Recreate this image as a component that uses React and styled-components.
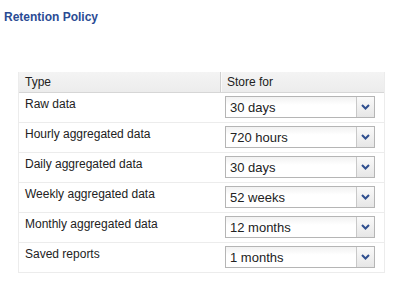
import React from 'react'
import styled, { createGlobalStyle } from 'styled-components'

const Global = createGlobalStyle`
  body {
    margin: 0;
    background: #fff;
    font-family: "Liberation Sans", Arial, sans-serif;
  }
`

const Page = styled.div`
  width: 400px;
  height: 300px;
  padding: 10px 0 0 4px;
  box-sizing: border-box;
`

const Title = styled.h2`
  margin: 0 0 47px;
  font-size: 12px;
  font-weight: bold;
  color: #2a4b94;
  line-height: 15px;
`

const Table = styled.div`
  margin-left: 14px;
  width: 365px;
  border: 1px solid #ececec;
  border-top: none;
  background: #fff;
`

const HeaderRow = styled.div`
  display: grid;
  grid-template-columns: 201px 1fr;
  height: 20px;
  background: linear-gradient(#f4f4f4, #ececec);
  border-bottom: 1px solid #d6d6d6;
`

const HeaderCell = styled.div`
  padding: 3px 6px 0;
  font-size: 12px;
  color: #222;
  border-left: ${({ $divider }) => ($divider ? '1px solid #d0d0d0' : 'none')};
  box-shadow: ${({ $divider }) => ($divider ? 'inset 1px 0 0 #fafafa' : 'none')};
`

const Row = styled.div`
  display: grid;
  grid-template-columns: 201px 1fr;
  height: 29px;
  border-bottom: 1px solid #ececec;
  &:last-child {
    border-bottom: none;
  }
`

const Label = styled.div`
  padding: 4px 6px 0;
  font-size: 12px;
  color: #222;
`

const SelectCell = styled.div`
  padding: 3px 0 0 5px;
`

const Select = styled.div`
  display: flex;
  width: 148px;
  height: 20px;
  border: 1px solid #b5b5b5;
  background: linear-gradient(#f2f2f2, #fff 40%);
`

const Value = styled.div`
  flex: 1;
  padding: 2px 4px 0;
  font-size: 13px;
  color: #222;
  line-height: 17px;
`

const Arrow = styled.div`
  width: 17px;
  display: flex;
  align-items: center;
  justify-content: center;
  border-left: 1px solid #c8c8c8;
  background: linear-gradient(#fafafa, #e6e6e6);
`

const rows = [
  ['Raw data', '30 days'],
  ['Hourly aggregated data', '720 hours'],
  ['Daily aggregated data', '30 days'],
  ['Weekly aggregated data', '52 weeks'],
  ['Monthly aggregated data', '12 months'],
  ['Saved reports', '1 months'],
]

const Chevron = () => (
  <svg width="9" height="6" viewBox="0 0 9 6">
    <path d="M1 1 L4.5 4.5 L8 1" fill="none" stroke="#2f4f8f" strokeWidth="2" />
  </svg>
)

const App = () => (
  <Page>
    <Global />
    <Title>Retention Policy</Title>
    <Table>
      <HeaderRow>
        <HeaderCell>Type</HeaderCell>
        <HeaderCell $divider>Store for</HeaderCell>
      </HeaderRow>
      {rows.map(([label, value]) => (
        <Row key={label}>
          <Label>{label}</Label>
          <SelectCell>
            <Select>
              <Value>{value}</Value>
              <Arrow>
                <Chevron />
              </Arrow>
            </Select>
          </SelectCell>
        </Row>
      ))}
    </Table>
  </Page>
)

export default App
